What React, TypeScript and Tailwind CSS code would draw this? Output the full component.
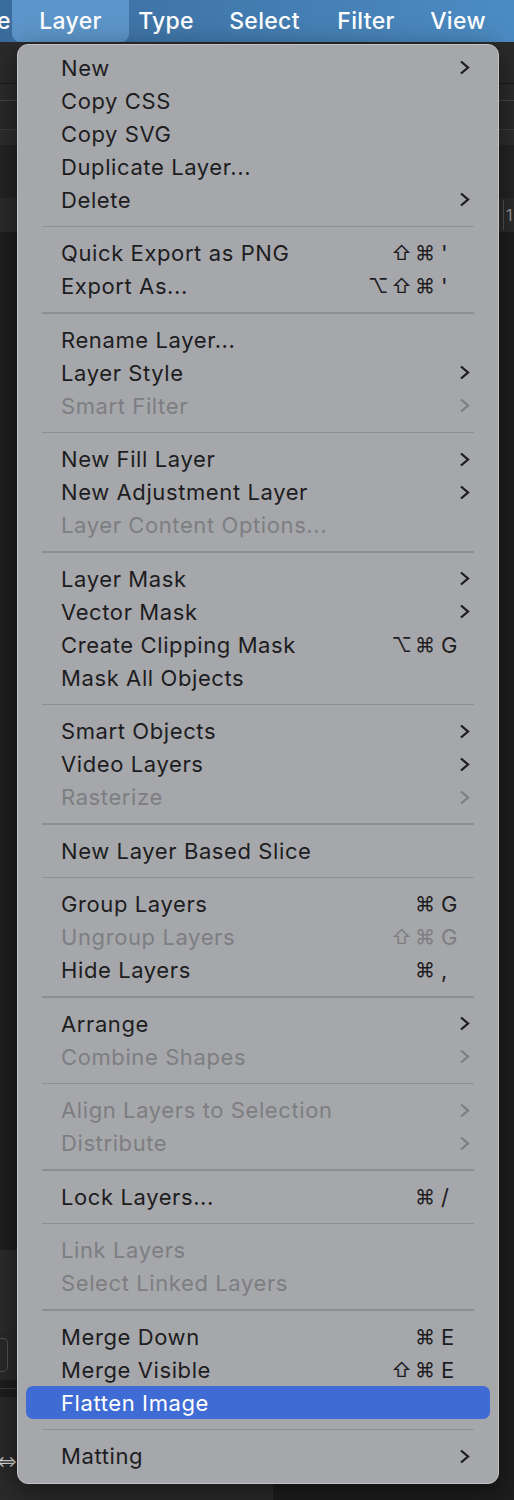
import React from 'react';

type Item = {
  label: string;
  sub?: boolean;
  disabled?: boolean;
  mods?: string;
  keyChar?: string;
  active?: boolean;
};

const sections: Item[][] = [
  [
    { label: 'New', sub: true },
    { label: 'Copy CSS' },
    { label: 'Copy SVG' },
    { label: 'Duplicate Layer...' },
    { label: 'Delete', sub: true },
  ],
  [
    { label: 'Quick Export as PNG', mods: '⇧⌘', keyChar: "'" },
    { label: 'Export As...', mods: '⌥⇧⌘', keyChar: "'" },
  ],
  [
    { label: 'Rename Layer...' },
    { label: 'Layer Style', sub: true },
    { label: 'Smart Filter', sub: true, disabled: true },
  ],
  [
    { label: 'New Fill Layer', sub: true },
    { label: 'New Adjustment Layer', sub: true },
    { label: 'Layer Content Options...', disabled: true },
  ],
  [
    { label: 'Layer Mask', sub: true },
    { label: 'Vector Mask', sub: true },
    { label: 'Create Clipping Mask', mods: '⌥⌘', keyChar: 'G' },
    { label: 'Mask All Objects' },
  ],
  [
    { label: 'Smart Objects', sub: true },
    { label: 'Video Layers', sub: true },
    { label: 'Rasterize', sub: true, disabled: true },
  ],
  [{ label: 'New Layer Based Slice' }],
  [
    { label: 'Group Layers', mods: '⌘', keyChar: 'G' },
    { label: 'Ungroup Layers', mods: '⇧⌘', keyChar: 'G', disabled: true },
    { label: 'Hide Layers', mods: '⌘', keyChar: ',' },
  ],
  [
    { label: 'Arrange', sub: true },
    { label: 'Combine Shapes', sub: true, disabled: true },
  ],
  [
    { label: 'Align Layers to Selection', sub: true, disabled: true },
    { label: 'Distribute', sub: true, disabled: true },
  ],
  [{ label: 'Lock Layers...', mods: '⌘', keyChar: '/' }],
  [
    { label: 'Link Layers', disabled: true },
    { label: 'Select Linked Layers', disabled: true },
  ],
  [
    { label: 'Merge Down', mods: '⌘', keyChar: 'E' },
    { label: 'Merge Visible', mods: '⇧⌘', keyChar: 'E' },
    { label: 'Flatten Image', active: true },
  ],
  [{ label: 'Matting', sub: true }],
];

const font = { fontFamily: '"Inter", "DejaVu Sans", sans-serif' };

function Chevron({ color }: { color: string }) {
  return (
    <svg width="11" height="15" viewBox="0 0 11 15" fill="none">
      <polyline points="2,1.5 9,7.5 2,13.5" stroke={color} strokeWidth="2.3" strokeLinejoin="miter" />
    </svg>
  );
}

function Row({ item }: { item: Item }) {
  const text = item.active ? 'text-white' : item.disabled ? 'text-[#7d7e82]' : 'text-[#1d1d1f]';
  return (
    <div
      className={`h-[33px] flex items-center pl-[35px] pr-[20px] rounded-[7px] ${
        item.active ? 'bg-[#3f6bd4]' : ''
      } ${text}`}
    >
      <span className="flex-1 text-[22px] leading-none tracking-[0.6px]">{item.label}</span>
      {item.mods && (
        <span className="flex items-center">
          <span className="text-[20px] leading-none tracking-[3px] mr-[3px]">{item.mods}</span>
          <span className="w-[29px] text-[22px] leading-none">{item.keyChar}</span>
        </span>
      )}
      {item.sub && (
        <span className="w-[29px] flex justify-end">
          <Chevron color={item.disabled ? '#7d7e82' : '#1d1d1f'} />
        </span>
      )}
    </div>
  );
}

function Menu() {
  return (
    <div className="absolute left-[17px] top-[44px] w-[482px] rounded-[11px] border border-[#c2c3c6] bg-[#a6a7ab] pt-[6px] pb-[10px] px-[8px] shadow-[0_8px_30px_rgba(0,0,0,0.5)]">
      {sections.map((sec, i) => (
        <div key={i}>
          {i > 0 && (
            <div className="h-[20.5px] flex items-center mx-[16px]">
              <div className="h-[1.5px] w-full bg-[#8e8f93]" />
            </div>
          )}
          {sec.map((it) => (
            <Row key={it.label} item={it} />
          ))}
        </div>
      ))}
    </div>
  );
}

function MenuBar() {
  const titles = [
    { t: 'Type', w: 'w-[74px]' },
    { t: 'Select', w: 'w-[123px]' },
    { t: 'Filter', w: 'w-[80px]' },
    { t: 'View', w: 'w-[104px]' },
  ];
  return (
    <div className="h-[42px] flex items-center bg-gradient-to-r from-[#3a6c9d] to-[#4c8cc3] text-white text-[23px] font-medium tracking-[0.3px]">
      <span className="w-[15px] -ml-[3px] overflow-hidden">e</span>
      <span className="w-[117px] h-[42px] flex items-center justify-center rounded-b-[8px] bg-[#5c95c9]">
        Layer
      </span>
      {titles.map((x) => (
        <span key={x.t} className={`${x.w} text-center`}>
          {x.t}
        </span>
      ))}
    </div>
  );
}

export default function App() {
  return (
    <div className="relative w-[514px] h-[1500px] overflow-hidden bg-[#1e1e1e]" style={font}>
      <MenuBar />
      <div className="flex flex-col">
        <div className="h-[41px] bg-[#2b2b2b]" />
        <div className="h-px bg-[#1c1c1c]" />
        <div className="h-[16px] bg-[#2c2c2c]" />
        <div className="h-px bg-[#464646]" />
        <div className="h-[28px] bg-[#2a2a2a]" />
        <div className="h-px bg-[#3e3e3e]" />
        <div className="h-[15px] bg-[#2e2e2e]" />
        <div className="h-[53px] bg-[#252525]" />
        <div className="h-[34px] bg-[#2c2c2c] flex justify-end items-center">
          <div className="w-px h-[30px] bg-[#555]" />
          <span className="text-[16px] text-[#9a9a9a] w-[8px] ml-[2px]">1</span>
        </div>
        <div className="flex h-[1268px]">
          <div className="w-[273px] flex flex-col">
            <div className="h-[1018px] bg-[#1f1f1f]" />
            <div className="h-[80px] bg-[#2c2c2c]" />
            <div className="h-[50px] bg-[#2a2a2a] flex items-center">
              <div className="w-[8px] h-[34px] border border-[#555] rounded-r-[5px] border-l-0" />
            </div>
            <div className="h-px bg-[#3a3a3a] my-[8px]" />
            <div className="h-[42px] bg-[#2a2a2a]" />
            <div className="h-[43px] bg-[#2a2a2a] flex items-center text-[#ddd] text-[16px]">
              <span className="-ml-[4px]">⇔</span>
            </div>
            <div className="flex-1 bg-[#2b2b2b]" />
          </div>
          <div className="flex-1 bg-[#1e1e1e]" />
        </div>
      </div>
      <Menu />
    </div>
  );
}
